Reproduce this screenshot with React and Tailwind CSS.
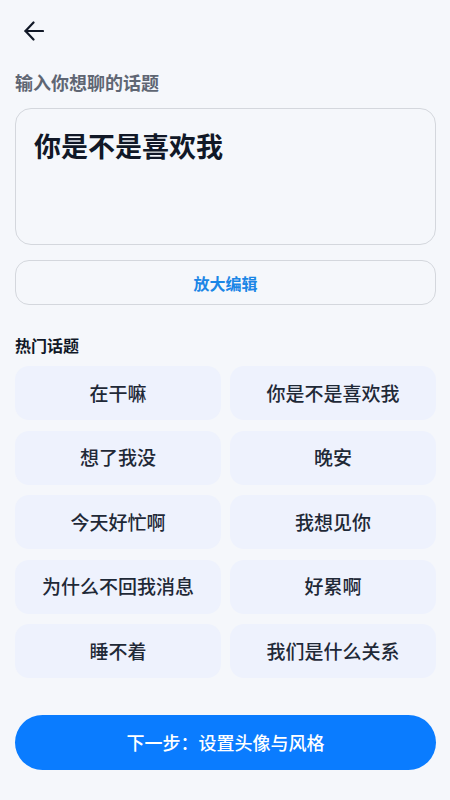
import React from 'react';

const topics = [
  '在干嘛',
  '你是不是喜欢我',
  '想了我没',
  '晚安',
  '今天好忙啊',
  '我想见你',
  '为什么不回我消息',
  '好累啊',
  '睡不着',
  '我们是什么关系',
];

const App = () => {
  return (
    <div
      className="min-h-screen bg-[#f5f7fb] pl-[15px] pr-[14px]"
      style={{ fontFamily: '"Noto Sans CJK SC", "Noto Sans", sans-serif' }}
    >
      {/* Back */}
      <div className="pt-[21px] pl-[9px]">
        <svg width="20" height="20" viewBox="0 0 20 20" fill="none" stroke="#111827" strokeWidth="2.2" strokeLinecap="round" strokeLinejoin="round">
          <path d="M19 10H1.5" />
          <path d="M9.5 1.5 1.5 10l8 8.5" />
        </svg>
      </div>

      {/* Input */}
      <div className="mt-[29px] text-[18px] leading-[24px] font-semibold text-[#5f6673]">输入你想聊的话题</div>
      <div className="mt-[14px] h-[137px] rounded-[16px] border border-[#d4d7dd] px-[18px] pt-[19px]">
        <div className="text-[27px] leading-[36px] font-bold text-[#111827]">你是不是喜欢我</div>
      </div>
      <button className="mt-[15px] flex h-[45px] w-full items-center justify-center rounded-[14px] border border-[#d4d7dd] text-[16px] font-semibold text-[#1b86e6]">
        放大编辑
      </button>

      {/* Hot topics */}
      <div className="mt-[29px] text-[16px] leading-[22px] font-semibold text-[#111827]">热门话题</div>
      <div className="mt-[10px] grid grid-cols-2 gap-x-[9px] gap-y-[10.5px]">
        {topics.map((t) => (
          <div
            key={t}
            className="flex h-[54px] items-center justify-center rounded-[14px] bg-[#eef2fd] text-[19px] font-medium text-[#1f2937]"
          >
            {t}
          </div>
        ))}
      </div>

      {/* Next */}
      <button className="mt-[37px] flex h-[55px] w-full items-center justify-center rounded-full bg-[#0a7cff] text-[18px] font-medium text-white">
        下一步：设置头像与风格
      </button>
    </div>
  );
};

export default App;
